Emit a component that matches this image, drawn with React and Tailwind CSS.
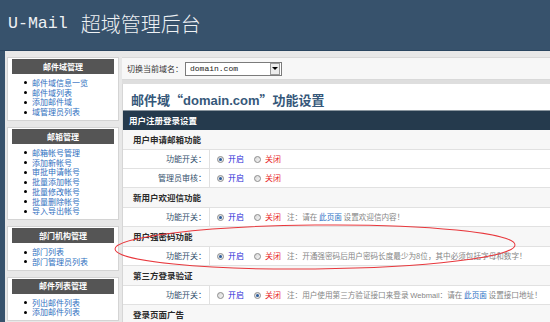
import React from 'react'

const menus = [
  { title: '邮件域管理', items: ['邮件域信息一览', '邮件域列表', '添加邮件域', '域管理员列表'] },
  { title: '邮箱管理', items: ['邮箱帐号管理', '添加新帐号', '审批申请帐号', '批量添加帐号', '批量修改帐号', '批量删除帐号', '导入导出帐号'] },
  { title: '部门机构管理', items: ['部门列表', '部门管理员列表'] },
  { title: '邮件列表管理', items: ['列出邮件列表', '添加邮件列表'] },
]

const cjk = { fontFamily: '"Noto Sans CJK SC", "Noto Sans", sans-serif' }

function Radio({ checked }) {
  return (
    <span className="w-[7px] h-[7px] rounded-full border border-[#8c8c8c] bg-gradient-to-br from-[#d8d8d8] to-[#f4f4f4] flex items-center justify-center shrink-0">
      {checked && <span className="w-[3px] h-[3px] rounded-full bg-[#2b5c9c]" />}
    </span>
  )
}

function Section({ title, h = 'h-[20px]' }) {
  return (
    <div className={`${h} bg-[#f7f7f7] border-b border-[#e1e1e1] flex items-center pl-[10px] text-[8.5px] font-bold text-[#2a2a2a]`}>
      {title}
    </div>
  )
}

function Option({ label, on = true, note, h = 'h-[19px]' }) {
  return (
    <div className={`${h} bg-white border-b border-[#e1e1e1] flex`}>
      <div className="w-[87px] shrink-0 border-r border-[#e1e1e1] flex items-center justify-end pr-[3px] text-[8px] text-[#34506c]">
        {label}
      </div>
      <div className="flex items-center pl-[7px] text-[8px] whitespace-nowrap">
        <Radio checked={on} />
        <span className="ml-[4px] text-[#2626d6]">开启</span>
        <span className="ml-[10px]"><Radio checked={!on} /></span>
        <span className="ml-[4px] text-[#e8262b]">关闭</span>
        {note && <span className="ml-[6px] text-[7.6px] text-[#858585]">{note}</span>}
      </div>
    </div>
  )
}

export default function App() {
  return (
    <div className="w-[550px] h-[322px] overflow-hidden bg-[#37526c] relative" style={cjk}>
      <div className="h-[51px] border-b border-[#2a4560] flex items-center pl-[8px] pb-[2px] text-[#eef1f4] text-[20px] leading-none whitespace-nowrap">
        <span className="text-[16.6px]" style={{ fontFamily: '"Liberation Mono", monospace' }}>U-Mail</span>
        <span className="ml-[13px] font-light">超域管理后台</span>
      </div>

      <div className="ml-[5px] h-[271px] bg-[#e8e8e8] flex">
        <div className="w-[117px] shrink-0 pl-[2px] pt-[6px] flex flex-col gap-[6px]">
          {menus.map(m => (
            <div key={m.title} className="w-[112px] bg-white border border-[#d4d4d4] px-[4px] pt-[1px] pb-[3px]">
              <div className="h-[15px] bg-[#555555] flex items-center justify-center text-white text-[8px] font-bold">
                {m.title}
              </div>
              <ul className="pt-[4px]">
                {m.items.map(item => (
                  <li key={item} className="flex items-center h-[9.75px] pl-[12px] text-[8px] text-[#2f6fc0]">
                    <span className="w-[3px] h-[3px] rounded-full bg-black mr-[5px]" />
                    {item}
                  </li>
                ))}
              </ul>
            </div>
          ))}
        </div>

        <div className="flex-1 min-w-0 pt-[6px]">
          <div className="h-[23px] bg-[#f7f7f7] border-y border-[#d9d9d9] flex items-center pl-[5px]">
            <span className="text-[8px] text-[#333]">切换当前域名：</span>
            <div className="ml-[2px] w-[97px] h-[14px] border border-[#7b7b7b] bg-white flex items-center justify-between">
              <span className="pl-[4px] text-[8px] text-[#222]" style={{ fontFamily: '"Liberation Mono", monospace' }}>domain.com</span>
              <span className="w-[10px] h-[12px] mr-[1px] border border-[#9a9a9a] bg-[#ececec] flex items-center justify-center">
                <span className="w-0 h-0 border-x-[3px] border-x-transparent border-t-[3px] border-t-black" />
              </span>
            </div>
          </div>
          <div className="h-[4px] bg-[#dedede]" />
          <div className="bg-white border-l border-[#d6d6d6]">
            <div className="h-[26px] pt-[9px] pl-[8px] text-[13px] leading-[13px] font-bold text-[#36587a] whitespace-nowrap">
              邮件域“<span style={{ fontFamily: '"Liberation Sans", sans-serif' }}>domain.com</span>”功能设置
            </div>
            <div className="h-[20px] bg-[#253a4d] border-t border-[#8b969f] flex items-center pl-[6px] text-white text-[8.5px] font-bold">
              用户注册登录设置
            </div>
            <Section title="用户申请邮箱功能" />
            <Option label="功能开关：" />
            <Option label="管理员审核：" />
            <Section title="新用户欢迎信功能" />
            <Option label="功能开关：" note={<>注：请在 <span className="text-[#1f6fc5]">此页面</span> 设置欢迎信内容！</>} />
            <Section title="用户强密码功能" />
            <Option label="功能开关：" note="注：开通强密码后用户密码长度最少为8位，其中必须包括字母和数字！" />
            <Section title="第三方登录验证" />
            <Option label="功能开关：" on={false} note={<>注：用户使用第三方验证接口来登录 <span style={{ fontFamily: '"Liberation Sans", sans-serif' }}>Webmail</span>：请在 <span className="text-[#1f6fc5]">此页面</span> 设置接口地址！</>} />
            <Section title="登录页面广告" />
          </div>
        </div>
      </div>

      <svg className="absolute inset-0 pointer-events-none" width="550" height="322">
        <ellipse cx="315" cy="247" rx="200" ry="22" fill="none" stroke="#e8383d" strokeWidth="1" transform="rotate(-0.6 315 247)" />
      </svg>
    </div>
  )
}
